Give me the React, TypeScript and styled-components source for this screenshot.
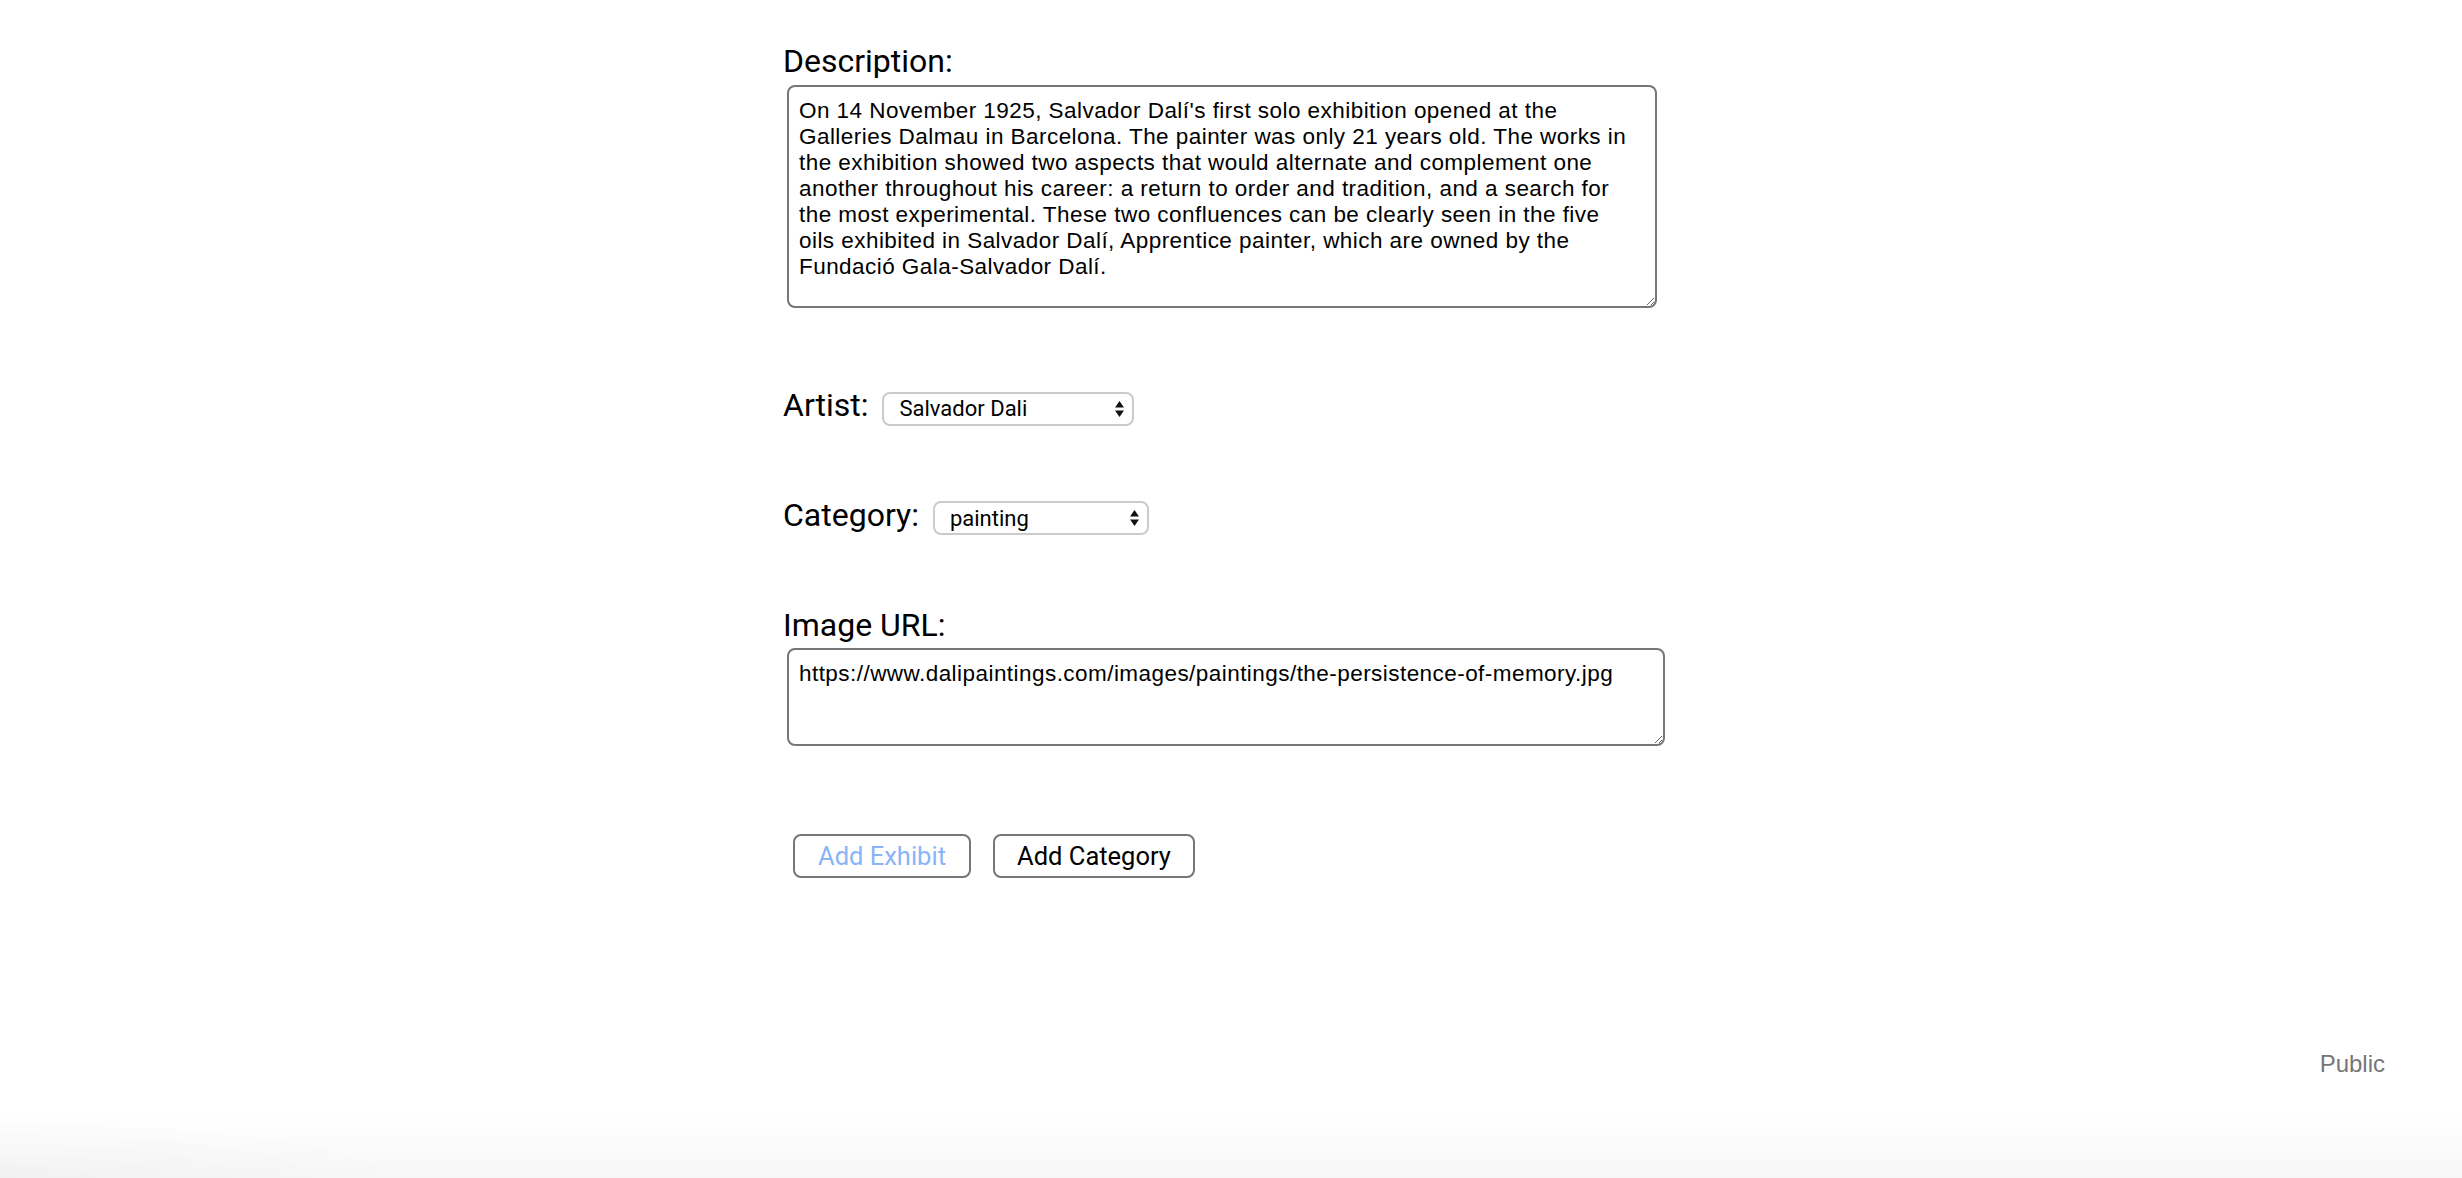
import React from 'react';
import styled, { createGlobalStyle } from 'styled-components';

const DESCRIPTION =
  "On 14 November 1925, Salvador Dalí's first solo exhibition opened at the Galleries Dalmau in Barcelona. The painter was only 21 years old. The works in the exhibition showed two aspects that would alternate and complement one another throughout his career: a return to order and tradition, and a search for the most experimental. These two confluences can be clearly seen in the five oils exhibited in Salvador Dalí, Apprentice painter, which are owned by the Fundació Gala-Salvador Dalí.";

const IMAGE_URL = 'https://www.dalipaintings.com/images/paintings/the-persistence-of-memory.jpg';

const UpDownIcon = () => (
  <svg width="11" height="20" viewBox="0 0 11 20" aria-hidden="true">
    <path d="M1 8.5 L5.5 2 L10 8.5 Z" fill="#111" />
    <path d="M1 11.5 L5.5 18 L10 11.5 Z" fill="#111" />
  </svg>
);

type DropdownProps = { width: number; value: string; options: string[] };

const Dropdown = ({ width, value, options }: DropdownProps) => (
  <SelectWrap>
    <Select $width={width} defaultValue={value}>
      {options.map((o) => (
        <option key={o} value={o}>
          {o}
        </option>
      ))}
    </Select>
    <Arrows>
      <UpDownIcon />
    </Arrows>
  </SelectWrap>
);

export default function App() {
  return (
    <>
      <GlobalStyle />
      <Page>
        <Form onSubmit={(e) => e.preventDefault()}>
          <Field>
            <Label htmlFor="description">Description:</Label>
            <TextArea id="description" $width={870} $height={223} defaultValue={DESCRIPTION} />
          </Field>

          <InlineField $top={78}>
            <Label>Artist:</Label>
            <Dropdown width={252} value="Salvador Dali" options={['Salvador Dali']} />
          </InlineField>

          <InlineField $top={70}>
            <Label>Category:</Label>
            <Dropdown width={216} value="painting" options={['painting', 'sculpture', 'drawing']} />
          </InlineField>

          <Field $top={71}>
            <Label htmlFor="image-url">Image URL:</Label>
            <TextArea id="image-url" $width={878} $height={98} $gap={4} defaultValue={IMAGE_URL} />
          </Field>

          <Actions>
            <Button type="submit" $width={178} disabled>
              Add Exhibit
            </Button>
            <Button type="button" $width={202}>
              Add Category
            </Button>
          </Actions>
        </Form>
        <Footer>
          <Visibility>Public</Visibility>
        </Footer>
      </Page>
    </>
  );
}

const GlobalStyle = createGlobalStyle`
  html, body {
    margin: 0;
    padding: 0;
    background: #fff;
  }
  body {
    font-family: Roboto, "Liberation Sans", sans-serif;
    color: #000;
  }
`;

const Page = styled.div`
  min-height: 100vh;
  display: flex;
  flex-direction: column;
`;

const Form = styled.form`
  flex: 1;
  width: 896px;
  margin: 0 auto;
  padding-top: 42px;
  box-sizing: border-box;
`;

const Field = styled.div<{ $top?: number }>`
  margin-top: ${(p) => p.$top ?? 0}px;
`;

const InlineField = styled.div<{ $top: number }>`
  display: flex;
  align-items: baseline;
  gap: 14px;
  margin-top: ${(p) => p.$top}px;
`;

const Label = styled.label`
  display: block;
  font-family: Roboto, sans-serif;
  font-size: 32px;
  line-height: 38px;
  color: #000;
`;

const TextArea = styled.textarea<{ $width: number; $height: number; $gap?: number }>`
  display: block;
  box-sizing: border-box;
  width: ${(p) => p.$width}px;
  height: ${(p) => p.$height}px;
  margin: ${(p) => p.$gap ?? 5}px 0 0 4px;
  padding: 11px 14px 10px 10px;
  border: 2px solid #767676;
  border-radius: 8px;
  background: #fff;
  color: #000;
  font-family: "Liberation Sans", Arial, sans-serif;
  font-size: 22.5px;
  line-height: 26px;
  letter-spacing: 0.45px;
  outline: none;
`;

const SelectWrap = styled.div`
  position: relative;
  display: inline-block;
`;

const Select = styled.select<{ $width: number }>`
  appearance: none;
  box-sizing: border-box;
  width: ${(p) => p.$width}px;
  height: 34px;
  padding: 0 30px 0 15px;
  border: 2px solid #cbcbcb;
  border-radius: 8px;
  background: #fff;
  color: #000;
  font-family: Roboto, sans-serif;
  font-size: 22px;
  outline: none;
`;

const Arrows = styled.span`
  position: absolute;
  right: 9px;
  top: 50%;
  transform: translateY(-50%);
  display: flex;
  pointer-events: none;
`;

const Actions = styled.div`
  display: flex;
  gap: 22px;
  margin: 88px 0 0 10px;
`;

const Button = styled.button<{ $width: number }>`
  box-sizing: border-box;
  width: ${(p) => p.$width}px;
  height: 44px;
  padding: 0;
  border: 2px solid #767676;
  border-radius: 8px;
  background: #fff;
  color: #000;
  font-family: Roboto, sans-serif;
  font-size: 25.5px;
  cursor: pointer;

  &:disabled {
    color: #8ab4f8;
    cursor: default;
  }
`;

const Footer = styled.footer`
  height: 138px;
  box-sizing: border-box;
  padding: 10px 77px 0 0;
  display: flex;
  justify-content: flex-end;
  align-items: flex-start;
  background:
    radial-gradient(ellipse 420px 60px at 0 100%, rgba(0, 0, 0, 0.025), transparent),
    linear-gradient(to bottom, #fff 0, #fff 72px, #f7f7f7 100%);
`;

const Visibility = styled.span`
  font-family: "Liberation Sans", Arial, sans-serif;
  font-size: 24px;
  line-height: 28px;
  color: #767676;
`;
